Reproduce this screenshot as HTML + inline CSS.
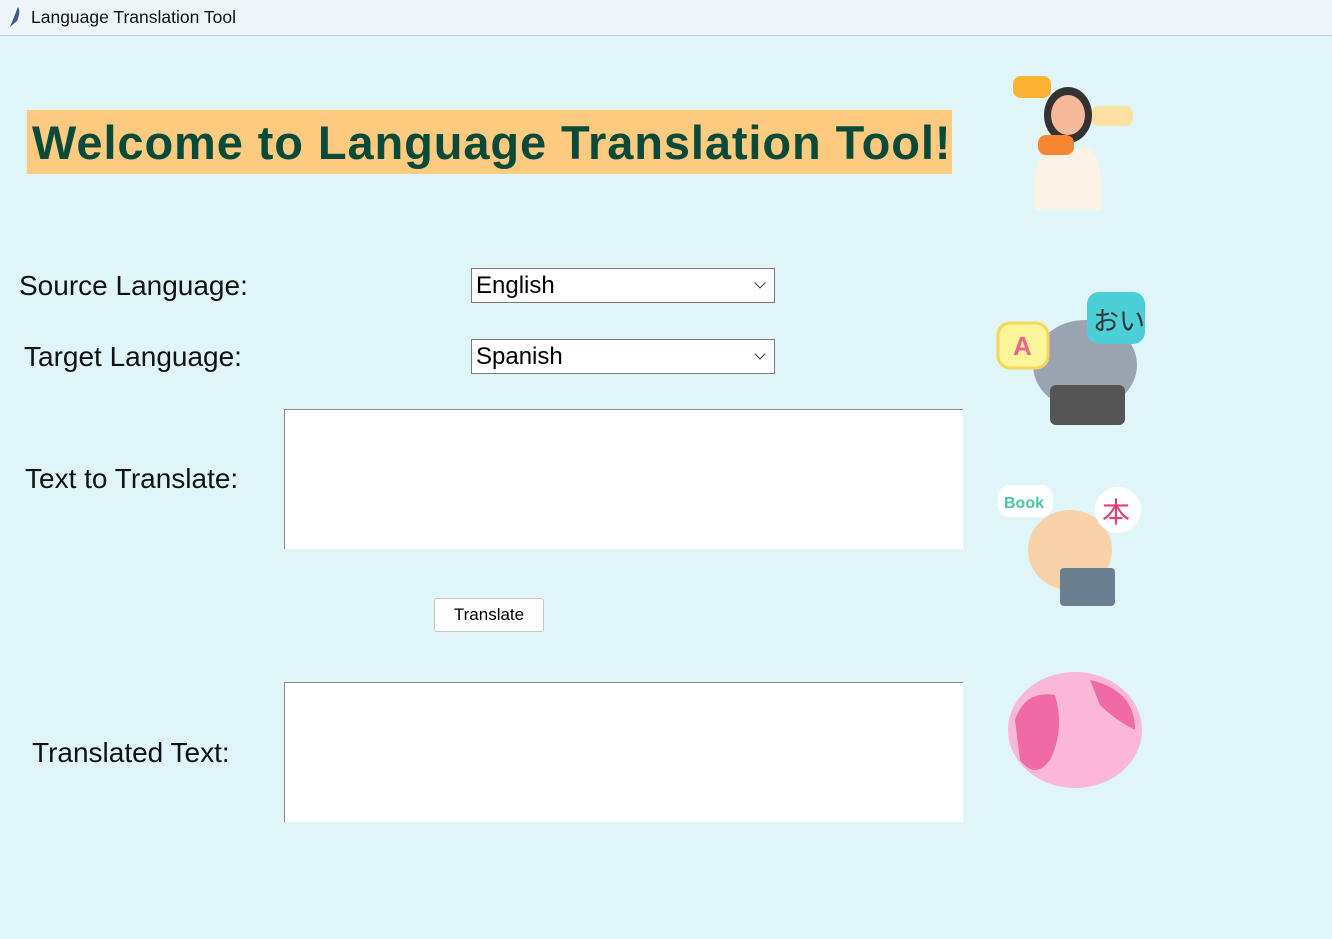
<!DOCTYPE html>
<html><head><style>
body{margin:0;width:1332px;height:939px;background:#dff5f8;font-family:"Liberation Sans",sans-serif;position:relative;overflow:hidden}
.tb{position:absolute;left:0;top:0;width:1332px;height:35px;background:#eef5f9;border-bottom:1px solid #b9cfd3}
.tb span{position:absolute;left:31px;top:7px;font-size:17.5px;color:#111}
.a{position:absolute}
.h{left:27px;top:110px;width:925px;height:64px;background:#fdcb7f;color:#0b4a3a;font-weight:bold;font-size:47px;line-height:66px;padding-left:5px;box-sizing:border-box;white-space:nowrap;letter-spacing:0.9px;overflow:hidden}
.l{font-size:28px;color:#111}
.cb{width:304px;height:35px;background:#fff;border:1px solid #7a7a7a;font-size:24px;line-height:33px;padding-left:4px;box-sizing:border-box}
.cb:after{content:"";position:absolute;right:10px;top:10px;width:7px;height:7px;border-right:1.5px solid #333;border-bottom:1.5px solid #333;transform:rotate(45deg)}
.tx{background:#fff;border-left:1px solid #888;border-top:1px solid #888;width:679px;height:140px;box-sizing:border-box}
.bt{left:434px;top:598px;width:110px;height:34px;background:#fdfdfd;border:1px solid #c6c6c6;border-radius:3px;box-sizing:border-box;font-size:17px;text-align:center;line-height:32px}
</style></head><body>
<div class="tb"><svg class="a" style="left:6px;top:5px" width="16" height="24"><path d="M4 22 L12 2 Q15 6 11 16 Z" fill="#3b5b8c"/></svg><span>Language Translation Tool</span></div>
<div class="a h">Welcome to Language Translation Tool!</div>
<div class="a l" style="left:19px;top:270px">Source Language:</div>
<div class="a l" style="left:24px;top:341px">Target Language:</div>
<div class="a l" style="left:25px;top:463px">Text to Translate:</div>
<div class="a l" style="left:32px;top:737px">Translated Text:</div>
<div class="a cb" style="left:471px;top:268px">English</div>
<div class="a cb" style="left:471px;top:339px">Spanish</div>
<div class="a tx" style="left:284px;top:409px"></div>
<div class="a tx" style="left:284px;top:682px"></div>
<div class="a bt">Translate</div>
<svg class="a" style="left:1005px;top:70px" width="135" height="145">
<rect x="8" y="6" width="38" height="22" rx="8" fill="#f9b233"/>
<rect x="86" y="36" width="42" height="20" rx="8" fill="#fde0a0"/>
<ellipse cx="63" cy="45" rx="24" ry="28" fill="#333"/>
<ellipse cx="63" cy="45" rx="17" ry="20" fill="#f6b99a"/>
<path d="M30 140 Q25 80 50 78 L80 78 Q100 80 96 140 Z" fill="#fbf1e4"/>
<rect x="33" y="65" width="36" height="20" rx="8" fill="#f5862f"/>
</svg>
<svg class="a" style="left:995px;top:290px" width="155" height="140">
<ellipse cx="90" cy="75" rx="52" ry="45" fill="#9aa4b1"/>
<rect x="55" y="95" width="75" height="40" rx="6" fill="#555"/>
<rect x="92" y="2" width="58" height="52" rx="12" fill="#4ccfd6"/>
<text x="98" y="40" font-size="26" fill="#333" font-family="Noto Sans CJK JP,sans-serif">おい</text>
<rect x="3" y="33" width="50" height="45" rx="12" fill="#fdf59a" stroke="#f7d55a" stroke-width="3"/>
<text x="18" y="65" font-size="26" font-weight="bold" fill="#f06292">A</text>
</svg>
<svg class="a" style="left:995px;top:480px" width="155" height="130">
<ellipse cx="75" cy="70" rx="42" ry="40" fill="#f7d1a8"/>
<rect x="65" y="88" width="55" height="38" rx="4" fill="#6a7f8f"/>
<rect x="3" y="5" width="55" height="32" rx="12" fill="#fff"/>
<text x="9" y="28" font-size="16" font-weight="bold" fill="#4cc4a8">Book</text>
<circle cx="123" cy="30" r="23" fill="#fff"/>
<text x="107" y="42" font-size="28" fill="#e0407a" font-family="Noto Sans CJK JP,sans-serif">本</text>
</svg>
<svg class="a" style="left:995px;top:660px" width="160" height="145">
<ellipse cx="80" cy="70" rx="67" ry="58" fill="#fbb8d6"/>
<path d="M20 60 Q30 30 60 35 Q70 70 55 100 Q40 120 25 100 Z" fill="#f06aa6"/>
<path d="M95 20 Q140 30 140 70 Q120 60 105 45 Z" fill="#f06aa6"/>
</svg>
</body></html>
